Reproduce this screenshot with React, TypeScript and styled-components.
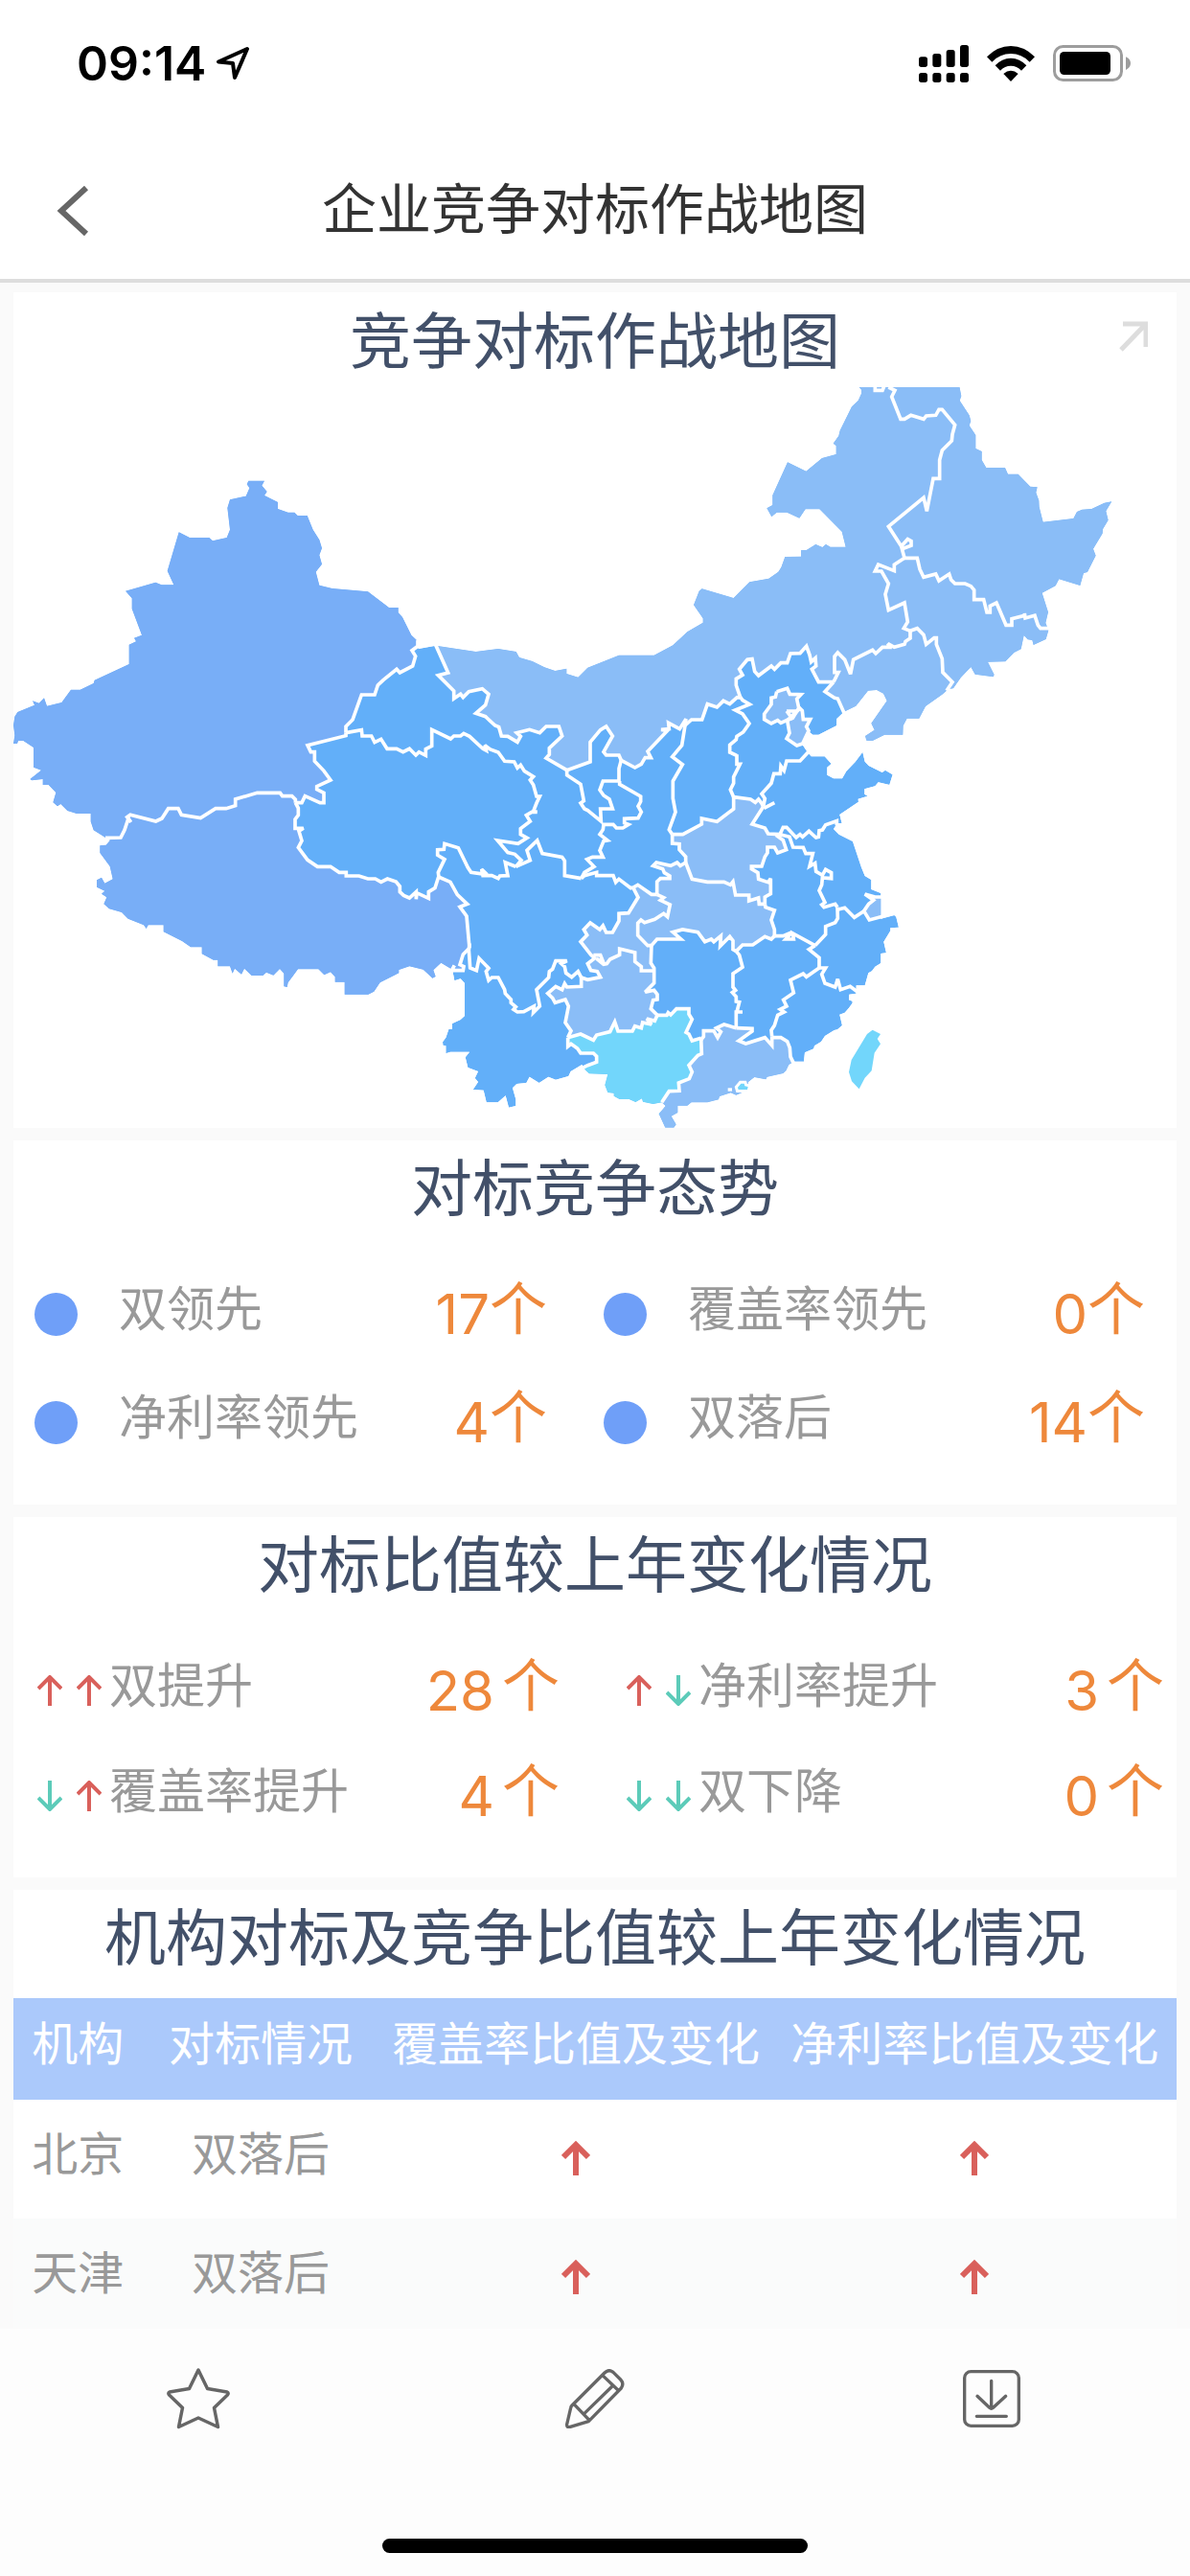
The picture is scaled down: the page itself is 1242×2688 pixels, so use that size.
import React from 'react';
import styled, { createGlobalStyle } from 'styled-components';

const cjk = `"Noto Sans CJK SC", "Noto Sans", sans-serif`;

const color = {
  page: '#fafafa',
  card: '#ffffff',
  rule: '#dddddd',
  navText: '#333333',
  title: '#425069',
  label: '#999999',
  value: '#ee883b',
  dot: '#6f9ff8',
  up: '#d9605b',
  down: '#5ccbb9',
  tableHead: '#abc9fb',
  stripe: '#fafbfb',
  icon: '#666666',
};

const GlobalStyle = createGlobalStyle`
  * { box-sizing: border-box; }
  body { margin: 0; background: ${color.page}; font-family: ${cjk}; }
  button { margin: 0; padding: 0; border: 0; background: none; font: inherit; cursor: pointer; }
  h1, h2, ul { margin: 0; padding: 0; font-weight: 400; list-style: none; }
  svg { display: block; }
`;

/* ---------- map geometry ---------- */

type Point = [number, number];
type Sheet = { x: number; y: number; sy: number };

const sheets: Record<string, Sheet> = {
  nw: { x: 0, y: 1440, sy: 1 },
  sw: { x: 0, y: 2340, sy: 1 },
  mid: { x: 1200, y: 1920, sy: 1.0332 },
  ne: { x: 2160, y: 1170, sy: 1 },
  se: { x: 1800, y: 2340, sy: 1 },
};

const pts = (sheet: string, text: string): Point[] => {
  const s = sheets[sheet];
  return text
    .trim()
    .split(/\s+/)
    .map((pair) => {
      const [x, y] = pair.split(',').map(Number);
      return [Math.round(x + s.x), Math.round(y * s.sy + s.y)] as Point;
    });
};

const toPath = (points: Point[]) => 'M' + points.map((p) => p.join(' ')).join('L');

const arcs: Record<string, Point[]> = {
  xinjiangGansu: [
    ...pts('mid', '125,60 108,84 108,100 90,112 101,130 92,160 52,180 42,169 0,202'),
    ...pts('nw', '1183,705 1173,735 1132,735 1104,813 1083,834 1083,854'),
  ],
  xinjiangQinghai: pts('nw', '1083,854 1083,863 963,893 973,914 985,914 985,943 1014,973 1035,1002 992,1022 992,1031 1014,1042 1014,1073 1002,1073 955,1052 945,1073 925,1073'),
  tibetQinghai: pts('sw', '925,173 934,190 934,212 924,225 924,253 950,253 936,262 945,292 934,313 963,352 994,373 1035,373 1062,391 1084,391 1084,402 1124,402 1152,411 1175,411 1193,421 1213,411 1240,420 1252,435 1252,452 1264,463 1282,471 1303,452 1303,475 1305,455 1342,472 1342,452 1362,440 1373,405'),
  tibetSichuan: pts('sw', '1373,405 1410,421 1432,461 1463,490 1440,499 1461,528 1470,628'),
  tibetYunnan: pts('sw', '1470,628 1450,648 1440,680 1452,686 1450,698 1415,698'),
  xinjiangTibet: pts('nw', '330,1183 378,1182 390,1158 402,1122 410,1134 398,1118 408,1111 488,1131 507,1122 527,1091 558,1091 568,1111 628,1121 675,1091 708,1091 737,1082 737,1062 805,1042 877,1042 884,1052 914,1052 925,1063 925,1073'),
  qinghaiGansu: [
    ...pts('nw', '1083,854 1132,845 1134,864 1163,864 1173,884 1193,874 1212,904 1242,904'),
    ...pts('mid', '10,410 42,410 62,420 82,410 102,430 112,420 133,431 133,411 152,402 152,352 211,380 221,372 242,372 252,364 270,373 312,410 322,415 318,400 335,412 360,421 380,448 410,450 420,468 430,460 442,478 470,495 460,505 470,520 480,555 490,555 480,575 470,600 482,602 465,602 448,612 460,630 430,652 430,670 450,680 422,698 358,688 390,725 412,730 432,748 415,768'),
  ],
  qinghaiSichuan: pts('mid', '415,768 382,755 390,795 365,796 360,803 340,795 312,795 308,775 325,792 275,785 265,770 235,710 192,698 190,715 170,716 170,733 192,745 172,785 174,800'),
  gansuSichuan: pts('mid', '415,768 460,748 450,718 482,688 498,728 560,738 568,750 568,795 620,803'),
  gansuShaanxi: pts('mid', '620,803 630,785 660,768 638,745 655,738 688,738 678,718 690,690 702,688 678,670 688,655 690,640 720,640 730,650 750,650 768,640 755,635 755,622 798,620 808,602 798,585 806,570 806,555 740,518 740,508'),
  gansuNingxia: pts('mid', '740,508 688,508 678,535 690,552 708,563 718,592 680,592 682,630 665,617 640,597 630,592 618,575 628,568 618,518 575,490 575,475'),
  gansuMongolia: pts('mid', '160,90 165,98 203,180 172,188 221,235 221,258 242,245 250,255 268,237 310,228 330,245 320,278 290,303 320,313 350,340 362,345 370,372 390,373 420,390 430,373 418,362 458,352 490,362 510,343 550,343 560,372 520,408 520,428 510,438 575,475'),
  ningxiaMongolia: pts('mid', '575,475 648,450 648,390 680,353 698,343 718,372 690,420 698,430 738,430 745,445'),
  ningxiaShaanxi: pts('mid', '745,445 738,470 738,508'),
  shaanxiMongolia: pts('mid', '745,445 788,467 808,457 820,437 838,437 828,418 890,355 870,352 895,350 893,332 928,350 948,320 945,340'),
  shanxiMongolia: pts('mid', '945,340 965,322 998,322 1015,275 1045,285 1065,265 1085,275 1108,255 1118,256'),
  shaanxiShanxi: pts('mid', '945,340 935,400 905,435 937,458 907,508 907,560 915,602 895,655 905,670'),
  shanxiHebei: [
    ...pts('ne', '157,1010 165,1022 187,1035 142,1053 165,1065 186,1095 167,1122 147,1135 145,1145 125,1162 125,1185 147,1195'),
    ...pts('se', '507,22 507,52 517,52 497,92 497,112 487,132 497,155'),
  ],
  hebeiMongolia: pts('ne', '157,1010 145,975 145,955 165,943 155,925 180,895 195,893 203,932 215,945 255,915 265,925 285,905 305,905 315,876 345,875 365,853 375,880 380,902 393,890 395,915 382,925 403,965 450,965'),
  hebeiLiaoning: pts('ne', '450,965 423,995 453,1015 463,1017 483,1062'),
  liaoningMongolia: pts('ne', '450,965 465,935 453,935 453,885 463,873 485,895 503,940 512,895 572,865 582,876 603,856 625,856 620,845 640,856 672,847 675,838 690,828 690,805'),
  jilinMongolia: pts('ne', '690,805 670,797 682,777 672,717 622,740 612,690 622,657 600,618 580,618 590,597 640,617 640,598 672,577'),
  heilongjiangMongolia: pts('ne', '672,577 662,540 622,478 732,388 742,430 762,328 782,328 782,270 790,240 820,210 822,190 830,160 790,112 780,112 770,130 740,132 732,142 692,130 672,142 660,142 632,72 642,52 622,42'),
  heilongjiangPocket: pts('ne', '662,540 682,518 693,524 693,538 665,548'),
  northPocket: pts('ne', '580,40 580,52 603,52 608,40'),
  jilinHeilongjiang: pts('ne', '672,577 712,577 720,612 732,637 770,627 780,648 812,627 818,645 830,657 862,657 880,665 890,677 890,707 920,707 930,747 940,747 940,727 960,717 990,787 1008,787 1008,767 1048,757 1048,750 1050,765 1080,757 1090,787 1098,797 1130,797'),
  jilinLiaoning: pts('ne', '690,805 712,797 732,817 740,847 765,827 772,827 772,847 790,892 792,935 822,965 804,992'),
  henanNorth: pts('se', '305,272 338,272 397,240 397,222 445,232 497,192 497,155 550,162 565,172 575,162 585,175 590,185'),
  henanShandong: pts('se', '590,185 555,240 595,252 605,270 642,272'),
  shandongSpur: pts('se', '592,190 625,173'),
  henanAnhui: pts('se', '642,272 635,278 652,290 662,320 635,330 625,312 603,312 603,330 595,342 585,372 553,372 553,380 573,392 575,412 605,422 613,410 613,458 595,468 595,490'),
  henanHubei: pts('se', '347,360 367,412 415,421 467,421 487,430 495,420 503,462 545,462 545,480 575,471 577,490 595,490'),
  henanShaanxi: pts('se', '305,272 305,300 327,302 327,320 347,342 347,360'),
  hubeiShaanxi: pts('se', '347,360 330,370 320,360 300,370 255,360 245,370 275,380 280,392 297,402 297,410 268,410 257,420 257,460'),
  chongqingShaanxi: pts('se', '257,460 240,460 197,430 183,438'),
  sichuanShaanxi: [
    ...pts('mid', '620,803 630,795 668,785 668,795 720,795 728,815 738,805 775,832'),
    ...pts('se', '183,438'),
  ],
  hubeiChongqing: pts('se', '257,460 278,470 268,478 298,492 290,530 278,520 250,538 218,548 207,540 197,550 197,588 228,620 240,620'),
  chongqingSichuan: pts('mid', '783,832 798,860 768,908 738,910 738,932 718,967 698,967 688,947 678,958 648,938 628,958 638,975 618,995 650,1035 662,1045 640,1062 650,1082 670,1085 680,1102 640,1110 620,1103'),
  guizhouChongqing: pts('mid', '658,1036 680,1036 690,1060 668,1046 690,1064 700,1062 710,1048 740,1035 740,1016 788,1028 788,1055 808,1070 808,1083 848,1083'),
  hunanChongqing: pts('mid', '840,1002 838,1060 848,1075 848,1083'),
  hunanGuizhou: pts('mid', '848,1083 848,1120 820,1148 848,1142 858,1155 858,1170 845,1172 838,1198 858,1218'),
  sichuanYunnan: pts('mid', '270,1000 268,1020 272,1074 292,1082 300,1045 330,1075 322,1085 330,1112 340,1103 360,1103 380,1140 382,1152 400,1170 400,1180 415,1192 408,1200 420,1208 440,1207 472,1190 470,1210 490,1190 480,1140 518,1103 520,1085 530,1078 540,1053 575,1053 558,1062 568,1070 572,1090 590,1102 610,1085 620,1103'),
  guizhouYunnan: pts('mid', '620,1103 620,1130 575,1132 568,1122 560,1140 540,1130 515,1152 530,1165 538,1180 570,1170 580,1190 570,1240 588,1265 578,1285'),
  guizhouGuangxi: pts('mid', '578,1285 618,1275 658,1293 668,1278 710,1268 725,1238 735,1266 780,1266 788,1250 808,1256 812,1240 840,1246 825,1228 850,1235 858,1218'),
  hunanGuangxi: pts('mid', '858,1218 888,1218 892,1210 900,1217 918,1198 957,1198 957,1215 967,1230 948,1270 957,1275 967,1295 995,1287'),
  guangdongGuangxi: pts('mid', '995,1287 997,1335 985,1340 957,1370 967,1390 958,1410 925,1423 927,1447 895,1448 872,1482'),
  yunnanGuangxi: pts('mid', '578,1285 578,1312 588,1305 608,1318 618,1333 658,1333 668,1342 668,1360 640,1370 622,1378'),
  hunanHubei: pts('se', '240,620 257,600 332,600 307,578 337,570 385,578 407,608 427,600 435,608 457,590 455,622 485,592 495,605 495,632 505,638'),
  jiangxiHubei: pts('se', '505,638 525,618 557,618 595,592 615,600 625,590'),
  anhuiHubei: pts('se', '595,490 597,500 625,510 615,540 625,570 625,590'),
  anhuiJiangxi: pts('se', '625,590 652,590 680,578 660,600 685,600 682,582 752,620'),
  hunanJiangxi: pts('se', '505,638 515,650 525,688 495,708 495,750 503,760 493,767 505,780 505,795 515,797 507,828 525,828 505,828 505,878'),
  hunanGuangdong: pts('se', '505,878 467,867 443,878 457,890 447,908 435,887 403,887 403,905 395,915'),
  jiangxiGuangdong: pts('se', '505,878 555,880 555,888 513,918 535,927 595,908 617,933 617,905'),
  jiangxiFujian: pts('se', '617,905 615,885 625,870 635,838 655,828 643,820 663,810 653,790 685,768 675,728 715,708 725,718 765,690'),
  fujianGuangdong: pts('se', '617,908 645,908 665,920 673,940 675,968 688,995'),
  zhejiangJiangxi: pts('se', '752,620 733,632 765,658 765,690'),
  zhejiangFujian: pts('se', '765,690 785,690 773,710 783,738 815,750 823,725 832,758 862,748 885,765'),
  zhejiangAnhui: pts('se', '752,620 785,585 785,560 815,548 823,535 822,500'),
  zhejiangJiangsu: pts('se', '822,508 845,502 875,532 905,512'),
  shanghai: pts('se', '966,468 940,468 908,459 935,478 920,490 905,512 922,540 966,528'),
  anhuiJiangsu: pts('se', '642,272 672,280 683,312 715,313 723,332 745,332 735,372 752,362 755,388 775,400 785,382 803,392 803,410 775,408 773,430 765,448 783,485 773,492 780,500 815,490 822,500'),
  shandongJiangsu: pts('se', '642,272 652,250 663,250 693,282 705,272 713,280 733,262 755,282 763,280 765,260 775,258 785,242 820,230 820,244'),
  hebeiShandong: pts('se', '735,10 705,42 663,42 655,72 645,58 643,82 623,82 615,112 585,145 595,160 590,185'),
  beijing: pts('ne', '272,995 305,985 313,1003 348,1004 335,1018 342,1050 318,1075 303,1085 285,1093 275,1085 255,1095 233,1082 233,1065 255,1035 255,1015 268,1012 272,995'),
  tianjin: pts('ne', '342,1045 352,1055 355,1082 377,1082 365,1105 372,1118 353,1158 335,1164 303,1142 312,1125 305,1085 322,1078 342,1045'),
  tianjinPocket: pts('ne', '303,1056 332,1056 318,1076 303,1056'),
};

const ring = (...parts: (string | Point[])[]) =>
  toPath(
    parts.flatMap((part) => {
      if (typeof part !== 'string') return part;
      return part.startsWith('-') ? [...arcs[part.slice(1)]].reverse() : arcs[part];
    }),
  ) + 'Z';

const mainland = ring(
  pts('nw', '1260,492 1247,478 1247,462 1218,462 1152,412 1040,402 1000,392 989,350 1008,326 1000,298 1008,276 1000,250 980,218 962,174 932,174 922,164 902,164 870,153 870,132 828,111 836,99 820,80 828,65 778,65 773,76 781,88 770,113 720,124 712,150 720,218 710,243 666,253 655,243 594,243 560,226 524,347 544,391 506,391 487,383 393,410 413,433 413,466 444,548 420,557 426,568 404,578 404,639 296,689 293,699 251,719 222,719 193,759 147,770 138,745 122,761 102,754 108,767 55,789 46,803 42,830 46,862 42,888 54,888 57,879 73,879 105,900 105,962 129,971 94,999 100,1003 134,999 134,1017 152,1017 175,1041 166,1072 180,1084 190,1077 211,1098 240,1107 284,1107 284,1132 293,1159 330,1182'),
  pts('sw', '345,290 332,305 313,307 313,330 344,372 353,412 328,425 318,407 303,415 303,437 328,449 318,458 334,469 325,490 342,505 381,516 401,536 450,556 458,567 464,556 512,556 512,577 570,606 597,625 632,625 632,646 668,665 682,665 682,685 720,685 728,707 735,692 756,710 765,692 788,714 823,714 834,704 856,713 876,693 889,707 889,748 899,750 902,736 933,694 997,694 1015,712 1035,703 1049,718 1049,734 1079,734 1079,773 1153,773 1171,764 1190,736 1249,706 1249,696 1282,685 1325,695 1354,722 1364,717 1357,697 1381,674 1411,692 1418,679 1428,685 1418,704 1423,730 1442,724 1455,738 1455,840 1442,852 1416,864 1416,882 1405,882 1396,908 1386,922 1387,932 1396,934 1396,958 1410,953 1470,953'),
  pts('mid', '257,1345 265,1376 297,1388 287,1408 297,1420 281,1443 314,1445 323,1482 359,1482 383,1461 393,1497 415,1492 415,1472 405,1438 418,1426 448,1423 458,1404 488,1423 517,1404 540,1413 580,1402 587,1388 622,1368 634,1385 645,1395 703,1397 694,1430 703,1452 722,1454 722,1462 740,1472 770,1472 790,1481 810,1470 813,1480 845,1487 872,1482 884,1492'),
  pts('se', '263,1147 283,1190 310,1190 317,1180 302,1154 322,1143 322,1121 352,1121 365,1111 415,1111 450,1102 453,1092 488,1081 505,1088 542,1072 542,1048 562,1032 598,1039 602,1031 652,1020 661,1012 670,993 686,983 717,983 720,955 748,943 750,934 771,921 783,903 812,885 822,883 837,870 829,836 845,830 858,815 869,800 869,794 858,790 859,773 881,770 881,745 908,745 919,706 930,700 940,686 958,675 958,645 975,643 967,608 988,574 988,565 1014,563 1006,530 1000,525 958,536 958,456 928,444 928,414 908,402 897,375 870,294 827,272 810,255 822,237 836,237 829,210 888,170 887,161 917,152 907,146 907,130 940,121 950,109 985,117 995,85 972,71 962,78 920,57 908,44 901,14 878,45 850,74 837,97 810,97 790,86 790,62 803,51 782,28 740,28 728,14'),
  pts('ne', '352,1160 370,1118 385,1130 403,1130 459,1102 460,1080 483,1058 520,1040 558,992 585,990 606,1001 617,1024 568,1094 578,1115 549,1134 553,1148 572,1149 610,1130 667,1130 668,1102 680,1079 718,1079 738,1041 790,1004 810,987 825,985 848,952 880,918 893,941 950,949 953,942 933,902 988,901 1015,873 1037,862 1046,819 1058,832 1072,834 1076,849 1115,831 1123,803 1114,780 1122,746 1103,686 1145,664 1156,643 1222,663 1233,624 1245,621 1271,569 1263,548 1292,500 1293,487 1310,458 1303,430 1321,400 1298,404 1258,423 1228,425 1212,432 1201,453 1106,464 1094,417 1093,397 1084,372 1088,355 1066,353 1028,314 996,314 987,294 928,294 914,270 914,243 895,234 895,192 875,162 880,148 875,130 845,84 850,70 845,44 840,30 530,30 530,42 537,50 537,62 527,84 507,103 470,178 466,194 449,218 458,226 458,252 414,264 364,305 306,277 259,380 259,411 241,421 256,448 272,434 304,434 343,452 362,424 406,424 476,494 488,542 440,542 426,534 415,543 394,534 365,552 348,553 348,572 298,573 286,606 277,620 247,641 187,652 137,702 38,673 29,680 12,724 41,766 41,779'),
  pts('mid', '952,56 907,97 848,127 738,127 640,165 610,194 574,183 574,167 538,174 505,164 467,145 426,134 416,116 360,107 290,116 175,100 160,99 110,107 108,84 88,66'),
);

const fills = {
  west: ring('xinjiangGansu', 'xinjiangQinghai', 'tibetQinghai', 'tibetSichuan', 'tibetYunnan', pts('sw', '1360,820 0,1190'), pts('nw', '0,0 1330,0')),
  north: ring('gansuMongolia', 'ningxiaMongolia', 'shaanxiMongolia', 'shanxiMongolia', 'hebeiMongolia', 'hebeiLiaoning', pts('ne', '540,1165 1440,1165 1440,0 0,0'), pts('mid', '160,0')),
  central: ring('henanNorth', 'henanShandong', 'henanAnhui', 'anhuiHubei', '-jiangxiHubei', '-hunanHubei', 'hunanChongqing', 'hunanGuizhou', '-guizhouGuangxi', '-guizhouYunnan', '-chongqingSichuan', '-chongqingShaanxi', '-hubeiShaanxi', '-henanShaanxi'),
  guangdong: ring('-hunanGuangdong', 'jiangxiGuangdong', 'fujianGuangdong', pts('se', '700,1200 240,1200'), '-guangdongGuangxi'),
  guangxi: ring('guizhouGuangxi', 'hunanGuangxi', 'guangdongGuangxi', pts('mid', '860,1540 600,1540'), '-yunnanGuangxi'),
  shanghai: ring('shanghai'),
  beijing: ring('beijing'),
  tianjin: ring('tianjin'),
  taiwan: ring(pts('se', '932,884 957,897 947,912 957,928 938,956 929,1012 908,1034 890,1069 867,1045 858,1016 866,978 915,897')),
  hongKong: ring(pts('se', '510,1064 520,1052 530,1052 532,1060 542,1062 540,1071 512,1071')),
};

const tint = { west: '#78aef7', base: '#62aff9', light: '#8abdf7', cyan: '#72d6fb' };

const MapSvg = styled.svg`
  width: 100%;
  height: auto;
`;

const ChinaMap = () => (
  <MapSvg viewBox="42 1212 3642 2318" role="img" aria-label="竞争对标作战地图">
    <clipPath id="mainland">
      <path d={mainland} />
    </clipPath>
    <g clipPath="url(#mainland)">
      <path d={mainland} fill={tint.base} />
      <path d={fills.west} fill={tint.west} />
      <path d={fills.north} fill={tint.light} />
      <path d={fills.central} fill={tint.light} />
      <path d={fills.guangdong} fill={tint.light} />
      <path d={fills.guangxi} fill={tint.cyan} />
      <path d={fills.shanghai} fill={tint.light} />
      <path d={fills.beijing} fill={tint.light} />
      <path d={fills.tianjin} fill={tint.light} />
    </g>
    <g fill="none" stroke="#fff" strokeWidth="11" strokeMiterlimit="3">
      {Object.entries(arcs).map(([name, points]) => (
        <path key={name} d={toPath(points)} />
      ))}
    </g>
    <path d={fills.taiwan} fill={tint.cyan} />
    <path d={fills.hongKong} fill={tint.cyan} stroke="#fff" strokeWidth="18" paintOrder="stroke" />
    <rect x="2279" y="3406" width="13" height="10" fill="#fff" />
  </MapSvg>
);

/* ---------- icons ---------- */

const StrokeIcon = styled.svg<{ $w: number; $h: number; $color?: string }>`
  width: ${(p) => p.$w}px;
  height: ${(p) => p.$h}px;
  fill: none;
  stroke: ${(p) => p.$color || color.icon};
`;

const TrendArrow = ({ dir, bold }: { dir: 'up' | 'down'; bold?: boolean }) => (
  <StrokeIcon
    $w={bold ? 30 : 26}
    $h={bold ? 36 : 32}
    $color={dir === 'up' ? color.up : color.down}
    viewBox={bold ? '0 0 30 36' : '0 0 26 32'}
    strokeWidth={bold ? 6 : 4}
    role="img"
    aria-label={dir === 'up' ? '上升' : '下降'}
  >
    {bold ? (
      <path d="M15 36V4M2 17L15 4L28 17" />
    ) : (
      <path d={dir === 'up' ? 'M13 32V3M1 14L13 2L25 14' : 'M13 0V29M1 18L13 30L25 18'} />
    )}
  </StrokeIcon>
);

/* ---------- layout ---------- */

const Screen = styled.div`
  display: flex;
  flex-direction: column;
  height: 100vh;
  overflow: hidden;
`;

const TopArea = styled.header`
  flex: none;
  background: ${color.card};
  border-bottom: 4px solid ${color.rule};
`;

const StatusBar = styled.div`
  display: flex;
  align-items: center;
  justify-content: space-between;
  height: 143px;
  padding: 0 62px 11px 80px;
`;

const StatusGroup = styled.div<{ $gap: number }>`
  display: flex;
  align-items: center;
  gap: ${(p) => p.$gap}px;
`;

const Clock = styled.span`
  font: 600 50px/60px Inter, sans-serif;
  color: #000;
`;

const NavBar = styled.div`
  display: grid;
  grid-template-columns: 1fr auto 1fr;
  align-items: center;
  height: 148px;
  padding: 0 58px;
`;

const BackButton = styled.button`
  padding-top: 6px;
`;

const NavTitle = styled.h1`
  padding-bottom: 6px;
  font-size: 57px;
  line-height: 80px;
  color: ${color.navText};
`;

const Content = styled.main`
  flex: 1;
  min-height: 0;
  overflow: hidden;
  display: flex;
  flex-direction: column;
  gap: 13px;
  padding: 10px 14px 0;
`;

const Card = styled.section`
  flex: none;
  background: ${color.card};
`;

const CardHeader = styled.div`
  display: grid;
  grid-template-columns: 1fr auto 1fr;
  align-items: center;
  height: 99px;
  padding: 0 30px;
`;

const CardTitle = styled.h2`
  grid-column: 2;
  padding-bottom: 8px;
  font-size: 64px;
  line-height: 90px;
  white-space: nowrap;
  color: ${color.title};
`;

const ExpandButton = styled.button`
  justify-self: end;
  padding-bottom: 8px;
`;

const StatList = styled.ul<{ $trend?: boolean }>`
  display: grid;
  grid-template-columns: ${(p) => (p.$trend ? '545fr 561fr' : '535fr 565fr')};
  grid-auto-rows: ${(p) => (p.$trend ? 110 : 113)}px;
  column-gap: ${(p) => (p.$trend ? 70 : 59)}px;
  padding: ${(p) => (p.$trend ? '27px 13px 30px 25px' : '26px 33px 29px 22px')};
`;

const Stat = styled.li`
  display: flex;
  align-items: center;
`;

const Dot = styled.i`
  flex: none;
  width: 45px;
  height: 45px;
  margin-right: 43px;
  border-radius: 50%;
  background: ${color.dot};
`;

const Arrows = styled.span`
  display: flex;
  gap: 15px;
  margin-right: 8px;
`;

const StatLabel = styled.span`
  flex: 1;
  padding-bottom: 18px;
  font-size: 50px;
  line-height: 70px;
  color: ${color.label};
`;

const StatValue = styled.span<{ $gap: number }>`
  display: flex;
  align-items: flex-start;
  gap: ${(p) => p.$gap}px;
  font: 400 58px/80px Inter, ${cjk};
  color: ${color.value};
`;

const Unit = styled.span`
  font: 400 60px/62px ${cjk};
`;

const Table = styled.table`
  width: 100%;
  margin-top: 14px;
  border-collapse: collapse;
  table-layout: fixed;
  font-size: 48px;
  line-height: 64px;
`;

const Th = styled.th<{ $w: number }>`
  width: ${(p) => p.$w}%;
  height: 106px;
  padding: 0 0 18px;
  background: ${color.tableHead};
  color: #fff;
  font-weight: 400;
  white-space: nowrap;
`;

const Row = styled.tr`
  &:nth-child(even) { background: ${color.stripe}; }
`;

const Td = styled.td`
  height: 124px;
  padding: 0 0 18px;
  text-align: center;
  color: ${color.label};
`;

const TrendTd = styled(Td)`
  padding: 0 0 2px;
  svg { margin: 0 auto; }
`;

const BottomBar = styled.footer`
  flex: none;
  display: flex;
  flex-direction: column;
  align-items: center;
  justify-content: space-between;
  height: 258px;
  padding-bottom: 24px;
  background: #fdfdfd;
`;

const Tools = styled.nav`
  display: grid;
  grid-template-columns: repeat(3, 1fr);
  width: 100%;
  height: 146px;
`;

const Tool = styled.button`
  display: flex;
  align-items: center;
  justify-content: center;
`;

const HomeIndicator = styled.div`
  width: 444px;
  height: 15px;
  border-radius: 8px;
  background: #000;
`;

/* ---------- data ---------- */

const standings = [
  { label: '双领先', count: 17 },
  { label: '覆盖率领先', count: 0 },
  { label: '净利率领先', count: 4 },
  { label: '双落后', count: 14 },
];

const changes: { label: string; count: number; trend: ('up' | 'down')[] }[] = [
  { label: '双提升', count: 28, trend: ['up', 'up'] },
  { label: '净利率提升', count: 3, trend: ['up', 'down'] },
  { label: '覆盖率提升', count: 4, trend: ['down', 'up'] },
  { label: '双下降', count: 0, trend: ['down', 'down'] },
];

const columns = [
  { name: '机构', width: 11.1 },
  { name: '对标情况', width: 20.3 },
  { name: '覆盖率比值及变化', width: 33.9 },
  { name: '净利率比值及变化', width: 34.7 },
];

const branches = [
  { name: '北京', status: '双落后' },
  { name: '天津', status: '双落后' },
];

export default function App() {
  return (
    <Screen>
      <GlobalStyle />
      <TopArea>
        <StatusBar>
          <StatusGroup $gap={10}>
            <Clock>09:14</Clock>
            <StrokeIcon $w={36} $h={36} $color="#000" viewBox="0 0 36 36" strokeWidth="4" strokeLinejoin="round" aria-hidden="true">
              <path d="M33 3L3 16.500L18 18L20 33Z" />
            </StrokeIcon>
          </StatusGroup>
          <StatusGroup $gap={19}>
            <svg width="52" height="39" viewBox="54 45 156 117" aria-hidden="true">
              {[82, 72, 60, 45].map((top, i) => (
                <g key={top}>
                  <rect x={54 + i * 43} y={top} width="27" height={114 - top} rx="8" />
                  <rect x={54 + i * 43} y="132" width="27" height="30" rx="8" />
                </g>
              ))}
            </svg>
            <svg width="50" height="37" viewBox="267 51 150 111" aria-hidden="true">
              <path d="M267 85Q300 51 342 51Q384 51 417 85L401 101Q376 75 342 75Q308 75 283 101Z" />
              <path d="M293 112Q314 89 342 89Q370 89 391 112L375 128Q361 113 342 113Q323 113 309 128Z" />
              <path d="M319 138Q330 128 342 128Q354 128 365 138L342 162Z" />
            </svg>
            <svg width="81" height="38" viewBox="474 51 243 114" aria-hidden="true">
              <rect x="478.500" y="55.500" width="210" height="105" rx="27" fill="none" stroke="#9d9d9d" strokeWidth="9" />
              <rect x="495" y="72" width="159" height="72" rx="14" />
              <path d="M702 88Q717 95 717 108Q717 121 702 129Z" fill="#9d9d9d" />
            </svg>
          </StatusGroup>
        </StatusBar>
        <NavBar>
          <BackButton type="button" aria-label="返回">
            <StrokeIcon $w={36} $h={52} viewBox="0 0 36 52" strokeWidth="6">
              <path d="M32 2L6 26L32 50" />
            </StrokeIcon>
          </BackButton>
          <NavTitle>企业竞争对标作战地图</NavTitle>
        </NavBar>
      </TopArea>

      <Content>
        <Card>
          <CardHeader>
            <CardTitle>竞争对标作战地图</CardTitle>
            <ExpandButton type="button" aria-label="展开">
              <StrokeIcon $w={30} $h={32} $color="#dddddd" viewBox="0 0 30 32" strokeWidth="5">
                <path d="M4 3H28V27M28 3L2 30" />
              </StrokeIcon>
            </ExpandButton>
          </CardHeader>
          <ChinaMap />
        </Card>

        <Card>
          <CardHeader>
            <CardTitle>对标竞争态势</CardTitle>
          </CardHeader>
          <StatList>
            {standings.map((s) => (
              <Stat key={s.label}>
                <Dot />
                <StatLabel>{s.label}</StatLabel>
                <StatValue $gap={0}>
                  {s.count}
                  <Unit>个</Unit>
                </StatValue>
              </Stat>
            ))}
          </StatList>
        </Card>

        <Card>
          <CardHeader>
            <CardTitle>对标比值较上年变化情况</CardTitle>
          </CardHeader>
          <StatList $trend>
            {changes.map((c) => (
              <Stat key={c.label}>
                <Arrows>
                  {c.trend.map((dir, i) => (
                    <TrendArrow key={i} dir={dir} />
                  ))}
                </Arrows>
                <StatLabel>{c.label}</StatLabel>
                <StatValue $gap={8}>
                  {c.count}
                  <Unit>个</Unit>
                </StatValue>
              </Stat>
            ))}
          </StatList>
        </Card>

        <Card>
          <CardHeader>
            <CardTitle>机构对标及竞争比值较上年变化情况</CardTitle>
          </CardHeader>
          <Table>
            <thead>
              <tr>
                {columns.map((c) => (
                  <Th key={c.name} $w={c.width} scope="col">
                    {c.name}
                  </Th>
                ))}
              </tr>
            </thead>
            <tbody>
              {branches.map((b) => (
                <Row key={b.name}>
                  <Td>{b.name}</Td>
                  <Td>{b.status}</Td>
                  <TrendTd>
                    <TrendArrow dir="up" bold />
                  </TrendTd>
                  <TrendTd>
                    <TrendArrow dir="up" bold />
                  </TrendTd>
                </Row>
              ))}
            </tbody>
          </Table>
        </Card>
      </Content>

      <BottomBar>
        <Tools>
          <Tool type="button" aria-label="收藏">
            <StrokeIcon $w={66} $h={64} viewBox="0 0 66 64" strokeWidth="3.500" strokeLinejoin="round">
              <path d="M33 2L42.500 21.500L63 25Q65 26 63.500 28L49.500 41.500L53.500 61.500L33 52L12.500 61.500L16.500 41.500L2.500 28Q1 26 3 25L23.500 21.500Z" />
            </StrokeIcon>
          </Tool>
          <Tool type="button" aria-label="编辑">
            <StrokeIcon $w={62} $h={62} viewBox="61 68 186 186" strokeWidth="10" strokeLinejoin="round" strokeLinecap="round">
              <path d="M82 182L184 80Q197 67 211 78L234 101Q246 114 236 128L134 232L74 250Q65 251 66 241L78 190Q79 185 82 182ZM88 178L134 226M180 90L226 134M208 122L120 208" />
            </StrokeIcon>
          </Tool>
          <Tool type="button" aria-label="下载">
            <StrokeIcon $w={60} $h={60} viewBox="1303 69 180 180" strokeWidth="10" strokeLinejoin="round" strokeLinecap="round">
              <rect x="1308" y="74" width="170" height="170" rx="20" />
              <path d="M1392 103V190M1348 151L1386 187Q1392 192 1398 187L1437 151M1346 214H1439" />
            </StrokeIcon>
          </Tool>
        </Tools>
        <HomeIndicator />
      </BottomBar>
    </Screen>
  );
}
